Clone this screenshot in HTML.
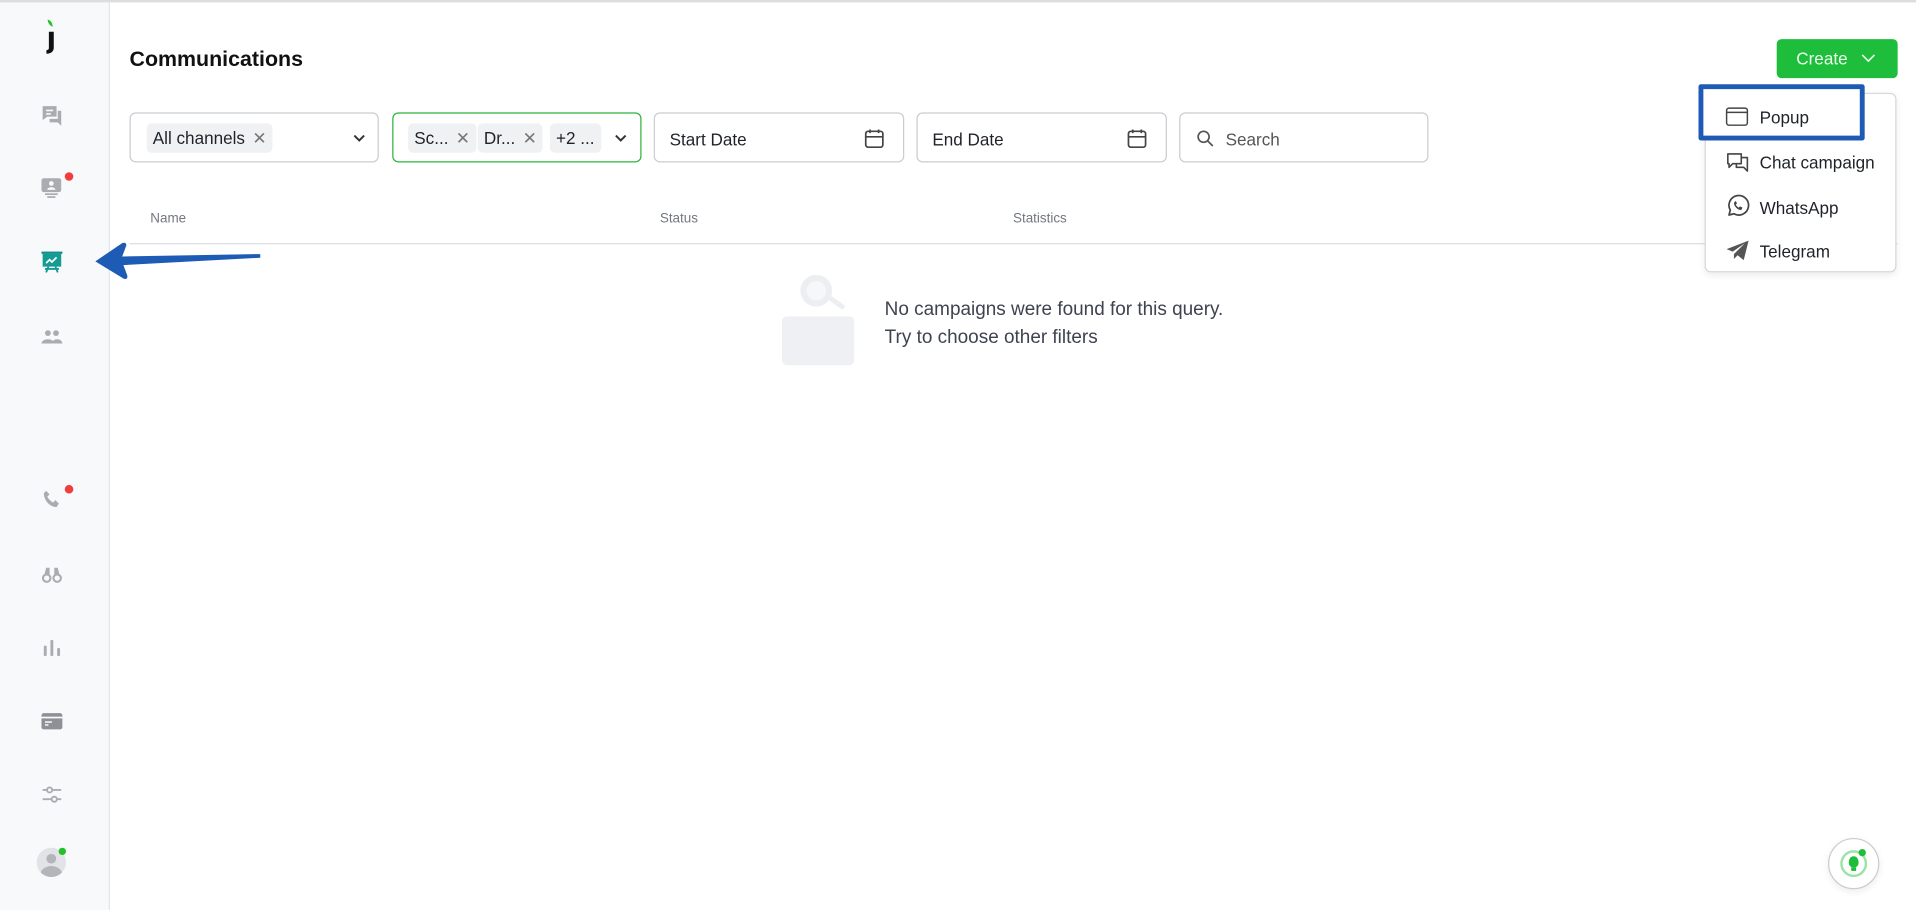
<!DOCTYPE html>
<html><head><meta charset="utf-8"><style>
html,body{margin:0;padding:0;width:1916px;height:910px;overflow:hidden;background:#fff}
#s{position:absolute;left:0;top:0;width:1568px;height:745px;transform:scale(1.22194,1.2215);transform-origin:0 0;font-family:"Liberation Sans",sans-serif;color:#1f2329}
.a{position:absolute;white-space:nowrap}
.box{position:absolute;top:92px;height:41px;border:1px solid #c9ccd1;border-radius:5px;box-sizing:border-box;background:#fff}
.tag{position:absolute;top:8px;height:24px;background:#f0f1f3;border-radius:4px;font-size:14px;line-height:24px;padding:0 5px;color:#1f2329;white-space:nowrap}
.tag i{font-style:normal;color:#777;margin-left:6px}
.lbl{position:absolute;left:12px;top:13px;font-size:14px}
.ico{position:absolute;left:33px;width:19px;height:19px}
.th{position:absolute;top:173px;font-size:11px;color:#737780}
.mi{position:absolute;left:0;font-size:14px;color:#1f2329;white-space:nowrap}
</style></head><body><div id="s">
<div class="a" style="left:0;top:0;width:1568px;height:2px;background:#ddd"></div>
<div class="a" style="left:0;top:2px;width:89px;height:743px;background:#f8f9fb;border-right:1px solid #e3e5e8"></div>
<!-- logo -->
<svg class="a" style="left:33px;top:16px" width="16" height="30" viewBox="0 0 16 30"><path d="M6 0c3 1 4 3 4 6c-2-1-4-3-4-6z" fill="#2bc02b"/><path d="M7 10h4v13c0 3-2 5-6 5v-3c1.5 0 2 -.5 2-2z" fill="#111"/></svg>
<!-- icons -->
<svg class="ico" style="top:85px" viewBox="0 0 20 20"><path d="M2 2h12v9H6l-4 3z" fill="#a9acb1"/><rect x="5" y="5" width="6" height="1.4" fill="#f8f9fb"/><rect x="5" y="8" width="4" height="1.4" fill="#f8f9fb"/><path d="M15 6h3v13l-3-3H8v-3h7z" fill="#a9acb1"/></svg>
<svg class="ico" style="top:144px" viewBox="0 0 20 20"><rect x="1" y="2" width="17" height="12" rx="2" fill="#a9acb1"/><circle cx="9.5" cy="6.5" r="2" fill="#f8f9fb"/><path d="M6 12c0-3 7-3 7 0z" fill="#f8f9fb"/><rect x="4" y="15" width="11" height="1.5" fill="#a9acb1"/><rect x="6" y="17.5" width="7" height="1.5" fill="#a9acb1"/></svg>
<div class="a" style="left:53px;top:141px;width:7px;height:7px;border-radius:50%;background:#f23d3d"></div>
<svg class="ico" style="top:205px" viewBox="0 0 20 20"><rect x="1" y="1" width="18" height="2" fill="#0f8f8a"/><rect x="2" y="3" width="16" height="11" fill="#139b94"/><path d="M5 11l3-3 2 2 4-4" stroke="#fff" stroke-width="1.5" fill="none"/><path d="M5 19l2-5M15 19l-2-5M4 16h12" stroke="#139b94" stroke-width="1.6"/></svg>
<svg class="ico" style="top:267px" viewBox="0 0 20 20"><circle cx="6.5" cy="6" r="2.5" fill="#a9acb1"/><circle cx="13.5" cy="6" r="2.5" fill="#a9acb1"/><path d="M1 15c0-5 11-5 11 0zM10 15c0-5 9-5 9 0z" fill="#a9acb1"/></svg>
<svg class="ico" style="top:399px" viewBox="0 0 20 20"><path d="M5 3l3 3-2 2c1 2 3 4 5 5l2-2 3 3-2 3C8 17 3 11 3 5z" fill="#a9acb1"/></svg>
<div class="a" style="left:53px;top:397px;width:7px;height:7px;border-radius:50%;background:#f23d3d"></div>
<svg class="ico" style="top:460px" viewBox="0 0 20 20"><path d="M3 13l2-8h3v8zM17 13l-2-8h-3v8z" fill="#a9acb1"/><circle cx="5.5" cy="14" r="3.2" fill="#f8f9fb" stroke="#a9acb1" stroke-width="1.8"/><circle cx="14.5" cy="14" r="3.2" fill="#f8f9fb" stroke="#a9acb1" stroke-width="1.8"/></svg>
<svg class="ico" style="top:521px" viewBox="0 0 20 20"><rect x="3" y="8" width="2.5" height="9" rx="1" fill="#a9acb1"/><rect x="8.7" y="3" width="2.5" height="14" rx="1" fill="#a9acb1"/><rect x="14.5" y="10" width="2.5" height="7" rx="1" fill="#a9acb1"/></svg>
<svg class="ico" style="top:581px" viewBox="0 0 20 20"><rect x="1" y="3" width="18" height="14" rx="2" fill="#8d9096"/><rect x="1" y="6" width="18" height="1.5" fill="#f8f9fb"/><rect x="4" y="10" width="6" height="1.3" fill="#f8f9fb"/><rect x="4" y="12.5" width="3" height="1.3" fill="#f8f9fb"/></svg>
<svg class="ico" style="top:641px" viewBox="0 0 20 20"><path d="M2 6h16M2 14h16" stroke="#a9acb1" stroke-width="1.6"/><circle cx="8" cy="6" r="2.2" fill="#f8f9fb" stroke="#a9acb1" stroke-width="1.6"/><circle cx="12" cy="14" r="2.2" fill="#f8f9fb" stroke="#a9acb1" stroke-width="1.6"/></svg>
<div class="a" style="left:30px;top:694px;width:24px;height:24px;border-radius:50%;background:#e2e3e6;overflow:hidden"><div class="a" style="left:8px;top:5px;width:8px;height:8px;border-radius:50%;background:#b3b5ba"></div><div class="a" style="left:3px;top:15px;width:18px;height:14px;border-radius:50%;background:#b3b5ba"></div></div>
<div class="a" style="left:48px;top:694px;width:6px;height:6px;border-radius:50%;background:#22c02a"></div>
<!-- arrow -->
<svg class="a" style="left:75px;top:196px" width="142" height="36" viewBox="0 0 142 36"><path d="M3 18L25 3c3-1 4 1 3 3l-3 8 113-2v3L26 21l3 8c1 3-1 4-3 3z" fill="#1d5bb5"/></svg>
<!-- header -->
<div class="a" style="left:106px;top:38px;font-size:17.5px;font-weight:bold;color:#111">Communications</div>
<div class="a" style="left:1454px;top:32px;width:99px;height:32px;background:#1ebe3c;border-radius:4px;color:#e9ffe9;font-size:14px;line-height:32px"><span style="position:absolute;left:16px">Create</span><svg class="a" style="left:69px;top:12px" width="12" height="8" viewBox="0 0 12 8"><path d="M1 1l5 5 5-5" stroke="#e9ffe9" stroke-width="1.3" fill="none"/></svg></div>
<!-- filters -->
<div class="box" style="left:106px;width:204px"><div class="tag" style="left:13px">All channels<i>✕</i></div><svg class="a" style="left:182px;top:16px" width="10" height="8" viewBox="0 0 10 8"><path d="M1 2l4 4 4-4" stroke="#333" stroke-width="1.6" fill="none"/></svg></div>
<div class="box" style="left:321px;width:204px;border-color:#2bb33a"><div class="tag" style="left:12px">Sc...<i>✕</i></div><div class="tag" style="left:69px">Dr...<i>✕</i></div><div class="tag" style="left:128px">+2 ...</div><svg class="a" style="left:181px;top:16px" width="10" height="8" viewBox="0 0 10 8"><path d="M1 2l4 4 4-4" stroke="#333" stroke-width="1.6" fill="none"/></svg></div>
<div class="box" style="left:535px;width:205px"><div class="lbl">Start Date</div><svg class="a" style="left:171px;top:12px" width="17" height="17" viewBox="0 0 17 17"><rect x="1.5" y="2.5" width="14" height="13" rx="2" stroke="#444" stroke-width="1.4" fill="none"/><path d="M1.5 7h14M5 1v3M12 1v3" stroke="#444" stroke-width="1.4"/></svg></div>
<div class="box" style="left:750px;width:205px"><div class="lbl">End Date</div><svg class="a" style="left:171px;top:12px" width="17" height="17" viewBox="0 0 17 17"><rect x="1.5" y="2.5" width="14" height="13" rx="2" stroke="#444" stroke-width="1.4" fill="none"/><path d="M1.5 7h14M5 1v3M12 1v3" stroke="#444" stroke-width="1.4"/></svg></div>
<div class="box" style="left:965px;width:204px"><svg class="a" style="left:13px;top:13px" width="15" height="15" viewBox="0 0 15 15"><circle cx="6" cy="6" r="4.5" stroke="#555" stroke-width="1.4" fill="none"/><path d="M9.5 9.5l4 4" stroke="#555" stroke-width="1.4"/></svg><div class="lbl" style="left:37px;color:#555">Search</div></div>
<!-- table header -->
<div class="th" style="left:123px">Name</div>
<div class="th" style="left:540px">Status</div>
<div class="th" style="left:829px">Statistics</div>
<div class="a" style="left:106px;top:199px;width:1447px;height:1px;background:#dcdee2"></div>
<!-- empty state -->
<div class="a" style="left:655px;top:225px;width:26px;height:26px;border-radius:50%;background:#eceef1"></div>
<div class="a" style="left:660px;top:230px;width:16px;height:16px;border-radius:50%;background:#f6f7f8"></div>
<div class="a" style="left:678px;top:246px;width:14px;height:4px;background:#eceef1;transform:rotate(35deg)"></div>
<div class="a" style="left:640px;top:259px;width:59px;height:40px;border-radius:4px;background:#eef0f3"></div>
<div class="a" style="left:724px;top:242px;font-size:15.5px;line-height:23px;color:#3e4350">No campaigns were found for this query.<br>Try to choose other filters</div>
<!-- dropdown -->
<div class="a" style="left:1395px;top:76px;width:157px;height:147px;background:#fff;border:1px solid #d5d7db;border-radius:5px;box-shadow:0 2px 6px rgba(0,0,0,.08);box-sizing:border-box"></div>
<div class="a" style="left:1390px;top:69px;width:136px;height:46px;border:4px solid #1d5bb5;border-radius:2px;box-sizing:border-box;background:#fff"></div>
<div class="a" style="left:1412px;top:86px">
<svg class="a" style="left:0;top:1px" width="19" height="17" viewBox="0 0 19 17"><rect x="1" y="1.5" width="17" height="14" rx="2" stroke="#444" stroke-width="1.2" fill="none"/><path d="M1 5h17" stroke="#444" stroke-width="1.2"/></svg>
<div class="mi" style="left:28px;top:2px">Popup</div>
<svg class="a" style="left:0;top:37px" width="20" height="20" viewBox="0 0 20 20"><path d="M2 3h11v8H6l-3 3v-3H2z" stroke="#444" stroke-width="1.3" fill="none" stroke-linejoin="round"/><path d="M9 11v3h6l3 3V6h-5" stroke="#444" stroke-width="1.3" fill="none" stroke-linejoin="round"/></svg>
<div class="mi" style="left:28px;top:39px">Chat campaign</div>
<svg class="a" style="left:0;top:73px" width="20" height="20" viewBox="0 0 20 20"><path d="M3 17l1-4A8 8 0 1 1 7 16z" stroke="#444" stroke-width="1.4" fill="none" stroke-linejoin="round"/><path d="M7 7c0 3 3 6 6 6l1-2-2-1-1 1c-1-.5-2-1.5-2.5-2.5l1-1-1-2z" fill="#444"/></svg>
<div class="mi" style="left:28px;top:76px">WhatsApp</div>
<svg class="a" style="left:0;top:110px" width="20" height="18" viewBox="0 0 20 18"><path d="M1 8L19 1l-4 16-5-4-3 3v-4l9-9-10 7z" fill="#555"/></svg>
<div class="mi" style="left:28px;top:112px">Telegram</div>
</div>
<!-- help bubble -->
<div class="a" style="left:1496px;top:686px;width:42px;height:42px;border-radius:50%;border:1px solid #ccc;background:#fff;box-sizing:border-box;box-shadow:0 2px 6px rgba(0,0,0,.08)"></div>
<div class="a" style="left:1506px;top:696px;width:22px;height:22px;border-radius:50%;border:2px solid #9de3a8;box-sizing:border-box"></div>
<div class="a" style="left:1513px;top:701px;width:8px;height:9px;border-radius:50% 50% 40% 40%;background:#1ebe3c"></div>
<div class="a" style="left:1515px;top:710px;width:4px;height:3px;background:#1ebe3c"></div>
<div class="a" style="left:1521px;top:695px;width:6px;height:6px;border-radius:50%;background:#1ebe3c"></div>
</div></body></html>
